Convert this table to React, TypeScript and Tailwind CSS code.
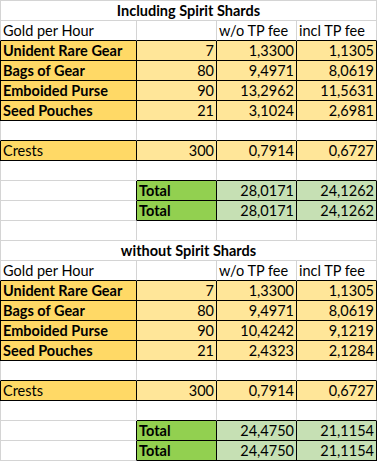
type Cell = {
  text?: string;
  bold?: boolean;
  right?: boolean;
  bg?: string;
};

type Row = { title?: string; cells?: Cell[] };

const LABEL = 'bg-[#ffd966]';
const VALUE = 'bg-[#ffe699]';
const TOTAL = 'bg-[#92d050]';
const SUM = 'bg-[#c6e0b4]';

const empty: Cell[] = [{}, {}, {}, {}];

function item(name: string, qty: string, a: string, b: string, bold = true): Cell[] {
  return [
    { text: name, bold, bg: LABEL },
    { text: qty, right: true, bg: VALUE },
    { text: a, right: true, bg: VALUE },
    { text: b, right: true, bg: VALUE },
  ];
}

function total(a: string, b: string): Cell[] {
  return [
    {},
    { text: 'Total', bold: true, bg: TOTAL },
    { text: a, right: true, bg: SUM },
    { text: b, right: true, bg: SUM },
  ];
}

function section(title: string, values: string[][], totals: [string, string]): Row[] {
  const names = ['Unident Rare Gear', 'Bags of Gear', 'Emboided Purse', 'Seed Pouches'];
  return [
    { title },
    { cells: [{ text: 'Gold per Hour' }, {}, { text: 'w/o TP fee' }, { text: 'incl TP fee' }] },
    ...values.map((v, i) => ({ cells: item(names[i], v[0], v[1], v[2]) })),
    { cells: empty },
    { cells: item('Crests', '300', '0,7914', '0,6727', false) },
    { cells: empty },
    { cells: total(totals[0], totals[1]) },
    { cells: total(totals[0], totals[1]) },
  ];
}

const rows: Row[] = [
  ...section(
    'Including Spirit Shards',
    [
      ['7', '1,3300', '1,1305'],
      ['80', '9,4971', '8,0619'],
      ['90', '13,2962', '11,5631'],
      ['21', '3,1024', '2,6981'],
    ],
    ['28,0171', '24,1262'],
  ),
  { cells: empty },
  ...section(
    'without Spirit Shards',
    [
      ['7', '1,3300', '1,1305'],
      ['80', '9,4971', '8,0619'],
      ['90', '10,4242', '9,1219'],
      ['21', '2,4323', '2,1284'],
    ],
    ['24,4750', '21,1154'],
  ),
];

const widths = ['w-[137px]', 'w-[80px]', 'w-[80px]', 'w-[80px]'];

function boxed(r: number, c: number) {
  const row = rows[r];
  if (!row || !row.cells) return false;
  return !!row.cells[c]?.bg;
}

export default function App() {
  return (
    <div className="w-[377px] bg-white text-black font-['Lato','Liberation_Sans',sans-serif] text-[14.5px]">
      {rows.map((row, r) => {
        if (row.title) {
          return (
            <div
              key={r}
              className={`h-[20px] border-l border-r border-b border-[#d4d4d4] text-center font-bold leading-[20px] ${r === 0 ? 'h-[21px] border-t' : ''}`}
            >
              {row.title}
            </div>
          );
        }
        return (
          <div key={r} className="flex">
            {row.cells!.map((cell, c) => {
              const self = !!cell.bg;
              const rightBlack = self || boxed(r, c + 1);
              const bottomBlack = self || boxed(r + 1, c);
              return (
                <div
                  key={c}
                  className={`${widths[c]} h-[20px] shrink-0 overflow-hidden whitespace-nowrap border-r border-b px-[2px] leading-[20px] ${
                    cell.bg ?? ''
                  } ${rightBlack ? 'border-r-black' : 'border-r-[#d4d4d4]'} ${
                    bottomBlack ? 'border-b-black' : 'border-b-[#d4d4d4]'
                  } ${c === 0 ? (self ? 'border-l border-l-black' : 'border-l border-l-[#d4d4d4]') : ''} ${
                    cell.right ? 'text-right' : 'text-left'
                  } ${cell.bold ? 'font-bold' : ''}`}
                >
                  {cell.text}
                </div>
              );
            })}
          </div>
        );
      })}
    </div>
  );
}
